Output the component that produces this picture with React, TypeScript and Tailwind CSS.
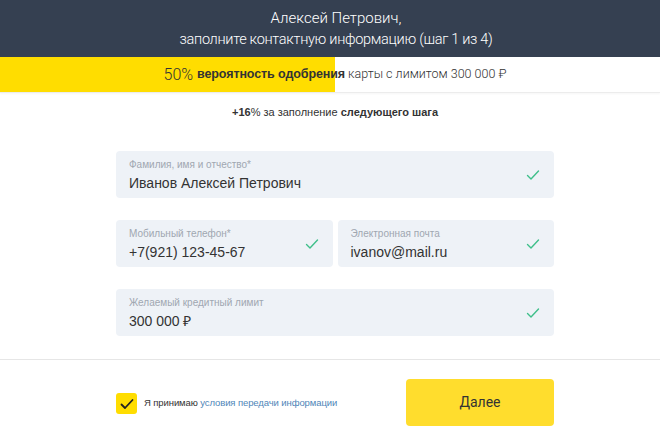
import React from 'react';

const Check = ({ className = '', w = 1.4 }: { className?: string; w?: number }) => (
  <svg width="14" height="12" viewBox="0 0 14 12" fill="none" className={className}>
    <path d="M1.5 6.5 L5 10 L12.5 2" stroke="currentColor" strokeWidth={w} strokeLinecap="round" strokeLinejoin="round" />
  </svg>
);

interface FieldProps {
  label: string;
  value: string;
  className?: string;
}

const Field: React.FC<FieldProps> = ({ label, value, className = '' }) => (
  <div className={`h-[47px] bg-[#eef2f7] rounded-[4px] flex items-center pl-[13px] pr-[14px] ${className}`}>
    <div className="flex-1 min-w-0 flex flex-col pt-[2px]">
      <span className="text-[10px] leading-[12px] text-[#a0a7b1]">{label}</span>
      <span className="text-[14px] leading-[18px] text-[#333] mt-[3px]">{value}</span>
    </div>
    <Check className="text-[#3fbf8a]" />
  </div>
);

export default function App() {
  return (
    <div className="w-[660px] h-[447px] bg-white flex flex-col" style={{ fontFamily: '"Liberation Sans", Arial, sans-serif' }}>
      {/* Header */}
      <div className="h-[57px] bg-[#354051] pl-[12px] flex flex-col items-center justify-center text-white text-[14px] leading-[22px] font-light" style={{ fontFamily: 'Roboto, "Liberation Sans", sans-serif' }}>
        <span className="text-[15px]">Алексей Петрович,</span>
        <span className="text-[14.5px] tracking-[-0.3px]">заполните контактную информацию (шаг 1 из 4)</span>
      </div>

      {/* Progress */}
      <div className="relative h-[36px] border-b border-[#ececec] shadow-[0_1px_2px_rgba(0,0,0,0.04)]">
        <div className="absolute left-0 top-0 h-full w-[335px] bg-[#ffdd00]" />
        <div className="relative h-full flex items-center justify-center text-[12.5px] text-[#333] pl-[10px]" style={{ fontFamily: 'Roboto, "Liberation Sans", sans-serif' }}>
          <span className="text-[16px] font-light">50%&nbsp;</span>
          <span className="font-bold text-[12.5px] tracking-[-0.1px]" style={{ fontFamily: '"Liberation Sans", sans-serif' }}>вероятность одобрения</span>
          <span className="font-light">&nbsp;карты с лимитом 300 000 ₽</span>
        </div>
      </div>

      <div className="text-center text-[11px] text-[#333] mt-[12px] leading-[14px] pl-[10px]">
        <b>+16</b>% за заполнение <b>следующего шага</b>
      </div>

      {/* Fields */}
      <div className="w-[438px] ml-[116px] mt-[32px] flex flex-col gap-[22px]">
        <Field label="Фамилия, имя и отчество*" value="Иванов Алексей Петрович" />
        <div className="flex gap-[5px]">
          <Field className="flex-1" label="Мобильный телефон*" value="+7(921) 123-45-67" />
          <Field className="flex-1" label="Электронная почта" value="ivanov@mail.ru" />
        </div>
        <Field label="Желаемый кредитный лимит" value="300 000 ₽" />
      </div>

      <div className="mt-[23px] border-t border-[#e6e6e6]" />

      {/* Footer */}
      <div className="w-[438px] ml-[116px] mt-[19px] flex items-center">
        <div className="flex items-center flex-1 pt-[2px]">
          <div className="w-[21px] h-[21px] bg-[#ffdd00] rounded-[3px] flex items-center justify-center text-[#222]">
            <Check w={1.8} />
          </div>
          <span className="ml-[7px] text-[9.5px] text-[#333] tracking-[-0.1px]">
            Я принимаю <span className="text-[#4f86b8]">условия передачи информации</span>
          </span>
        </div>
        <button className="w-[148px] h-[47px] bg-[#ffdd2d] rounded-[4px] text-[14px] text-[#333]" style={{ fontFamily: 'Roboto, "Liberation Sans", sans-serif' }}>
          Далее
        </button>
      </div>
    </div>
  );
}
